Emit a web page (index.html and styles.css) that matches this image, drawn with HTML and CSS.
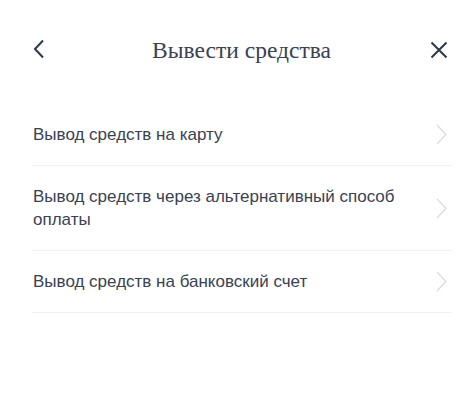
FILE: index.html
```html
<!DOCTYPE html>
<html lang="ru">
<head>
<meta charset="utf-8">
<link rel="stylesheet" href="styles.css">
</head>
<body>
<div class="panel">
  <header class="head">
    <button class="icon-btn back" aria-label="Назад">
      <svg width="12" height="20" viewBox="0 0 12 20"><path d="M10 1.5 L2 10 L10 18.5" fill="none" stroke="#2f3748" stroke-width="2"/></svg>
    </button>
    <h1 class="title">Вывести средства</h1>
    <button class="icon-btn close" aria-label="Закрыть">
      <svg width="18" height="18" viewBox="0 0 18 18"><path d="M1.5 1.5 L16.5 16.5 M16.5 1.5 L1.5 16.5" fill="none" stroke="#2f3748" stroke-width="2"/></svg>
    </button>
  </header>
  <ul class="list">
    <li class="item"><span class="label">Вывод средств на карту</span><svg class="chev" width="11" height="21" viewBox="0 0 11 21"><path d="M1 1 L10 10.5 L1 20" fill="none" stroke="#dcdcdc" stroke-width="1.3"/></svg></li>
    <li class="item"><span class="label">Вывод средств через альтернативный способ оплаты</span><svg class="chev" width="11" height="21" viewBox="0 0 11 21"><path d="M1 1 L10 10.5 L1 20" fill="none" stroke="#dcdcdc" stroke-width="1.3"/></svg></li>
    <li class="item"><span class="label">Вывод средств на банковский счет</span><svg class="chev" width="11" height="21" viewBox="0 0 11 21"><path d="M1 1 L10 10.5 L1 20" fill="none" stroke="#dcdcdc" stroke-width="1.3"/></svg></li>
  </ul>
</div>
</body>
</html>
```

FILE: styles.css
```css
html, body {
  margin: 0;
  padding: 0;
  background: #fff;
}
.panel {
  width: 469px;
  height: 415px;
  box-sizing: border-box;
  padding: 0 17px 0 32px;
}
.head {
  height: 104px;
  display: flex;
  align-items: center;
  justify-content: space-between;
  padding-bottom: 4px;
  box-sizing: border-box;
}
.icon-btn {
  border: 0;
  background: none;
  padding: 0;
  margin: 0;
  display: flex;
  align-items: center;
}
.back { width: 14px; margin-left: 1px; margin-bottom: 2px; }
.close { margin-right: 4px; }
.title {
  margin: 0 0 0 6px;
  font-family: "Liberation Serif", serif;
  font-weight: normal;
  font-size: 23.5px;
  color: #3a4152;
}
.list {
  list-style: none;
  margin: 0;
  padding: 0;
}
.item {
  display: flex;
  align-items: center;
  justify-content: space-between;
  padding: 19px 5px 19px 1px;
  min-height: 23px;
  border-bottom: 1px solid #f0f0f0;
}
.label {
  font-family: "Liberation Sans", Arial, sans-serif;
  font-size: 17px;
  line-height: 23px;
  color: #3a4152;
  max-width: 370px;
}
.chev { flex: none; }
```
